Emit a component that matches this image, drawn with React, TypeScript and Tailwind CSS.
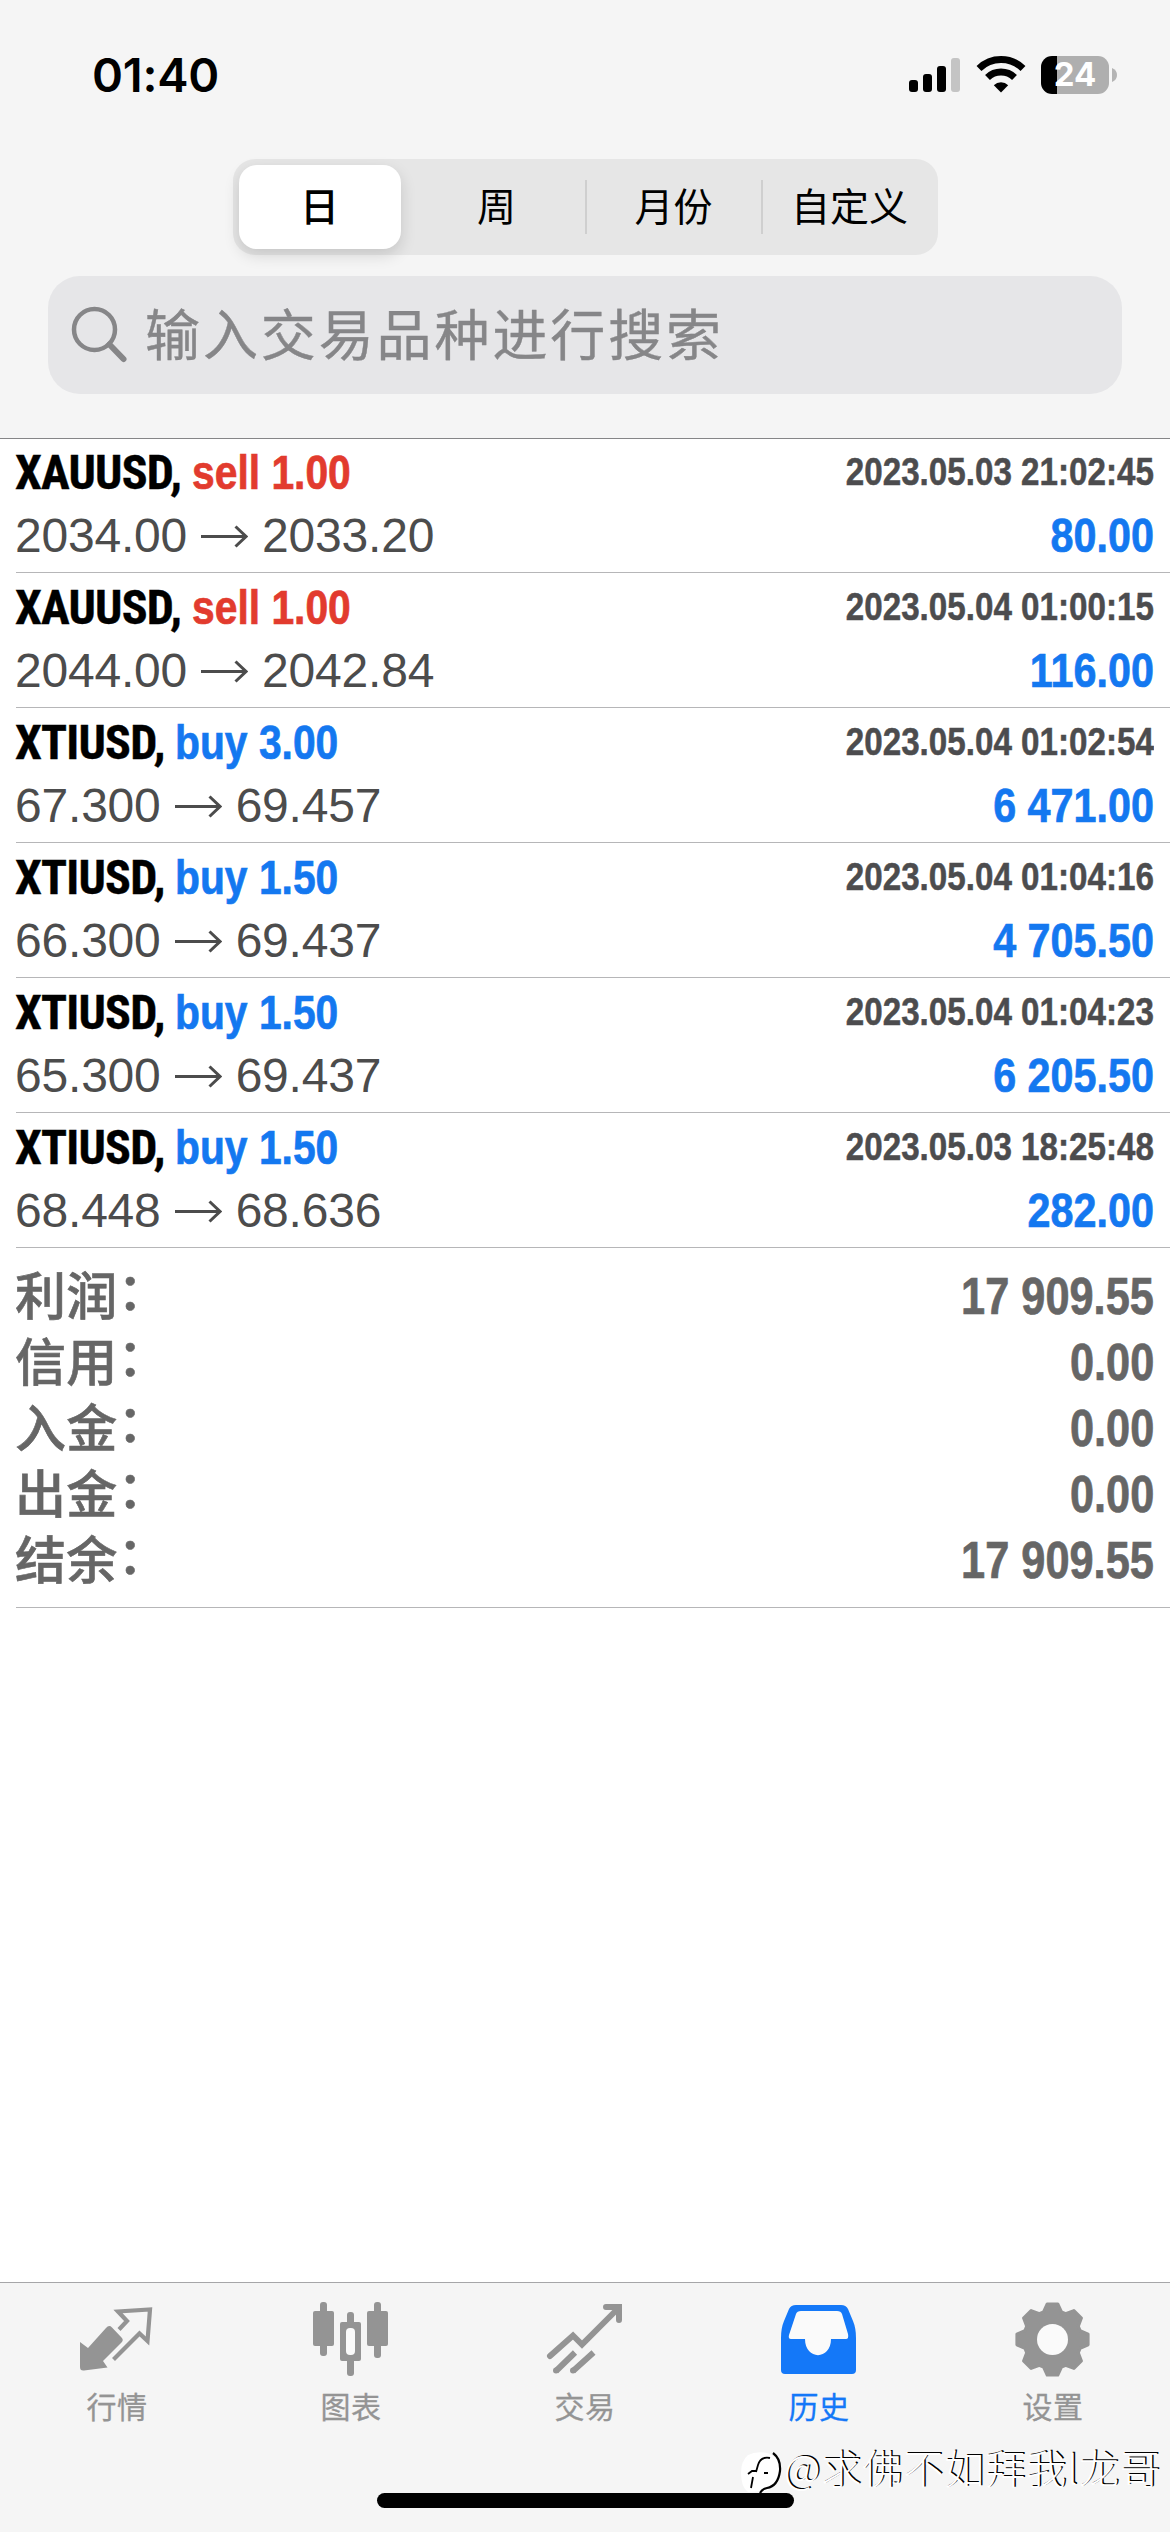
import type { ReactNode } from "react";
import clsx from "clsx";

type Deal = {
  symbol: string;
  side: "buy" | "sell";
  volume: string;
  open: string;
  close: string;
  time: string;
  profit: string;
};

const DEALS: Deal[] = [
  { symbol: "XAUUSD", side: "sell", volume: "1.00", open: "2034.00", close: "2033.20", time: "2023.05.03 21:02:45", profit: "80.00" },
  { symbol: "XAUUSD", side: "sell", volume: "1.00", open: "2044.00", close: "2042.84", time: "2023.05.04 01:00:15", profit: "116.00" },
  { symbol: "XTIUSD", side: "buy", volume: "3.00", open: "67.300", close: "69.457", time: "2023.05.04 01:02:54", profit: "6 471.00" },
  { symbol: "XTIUSD", side: "buy", volume: "1.50", open: "66.300", close: "69.437", time: "2023.05.04 01:04:16", profit: "4 705.50" },
  { symbol: "XTIUSD", side: "buy", volume: "1.50", open: "65.300", close: "69.437", time: "2023.05.04 01:04:23", profit: "6 205.50" },
  { symbol: "XTIUSD", side: "buy", volume: "1.50", open: "68.448", close: "68.636", time: "2023.05.03 18:25:48", profit: "282.00" },
];

const SUMMARY = [
  { label: "利润", value: "17 909.55" },
  { label: "信用", value: "0.00" },
  { label: "入金", value: "0.00" },
  { label: "出金", value: "0.00" },
  { label: "结余", value: "17 909.55" },
];

const PERIODS = ["日", "周", "月份", "自定义"];

function gearPath(cx: number, cy: number): string {
  const points: string[] = [];
  for (let i = 0; i < 8; i++) {
    for (const [r, offset] of [[29, -18], [36, -8.5], [36, 8.5], [29, 18]]) {
      const a = ((i * 45 + offset) * Math.PI) / 180;
      points.push(`${(cx + r * Math.cos(a)).toFixed(2)} ${(cy + r * Math.sin(a)).toFixed(2)}`);
    }
  }
  return `M${points.join("L")}Z`;
}

function StatusBar() {
  return (
    <div className="flex h-[149px] items-center justify-between pl-[92px] pr-[53px]">
      <span className="font-['Inter',sans-serif] text-[47px] font-semibold leading-none tracking-[-0.2px]">01:40</span>
      <div className="flex items-center">
        <svg className="h-[40px] w-[54px]" viewBox="0 0 54 40">
          <rect x="1" y="25" width="9" height="12" rx="3" />
          <rect x="15" y="19" width="9" height="18" rx="3" />
          <rect x="29" y="11" width="9" height="26" rx="3" />
          <rect x="43" y="3" width="9" height="34" rx="3" fill="#c4c4c4" />
        </svg>
        <svg className="ml-[14px] h-[40px] w-[50px]" viewBox="0 0 50 40" fill="none" stroke="#000" strokeWidth="7">
          <path d="M3 13.5a31.5 31.5 0 0 1 44 0" />
          <path d="M11.5 22.5a19.5 19.5 0 0 1 27 0" />
          <path d="M17.8 30.2a10.5 10.5 0 0 1 14.4 0L25 37.5Z" fill="#000" stroke="none" />
        </svg>
        <div className="ml-[15px] flex h-[38px] w-[68px] items-center justify-center rounded-[11px] bg-[linear-gradient(90deg,#000_16px,#afafaf_16px)] font-['Inter',sans-serif] text-[33px] font-bold leading-none text-white">
          24
        </div>
        <svg className="ml-[3px] h-[14px] w-[5px]" viewBox="0 0 5 14" fill="#b4b4b4">
          <path d="M0 0Q5 2 5 7T0 14Z" />
        </svg>
      </div>
    </div>
  );
}

function PeriodPicker() {
  return (
    <div className="mx-auto mt-[10px] flex h-[96px] w-[705px] items-center rounded-[22px] bg-[#e6e6e6] text-[39px]">
      {PERIODS.map((period, i) => (
        <div
          key={period}
          className={clsx(
            "flex items-center justify-center pb-[5px]",
            i === 0
              ? "ml-[6px] mr-[8px] h-[84px] w-[162px] rounded-[18px] bg-white font-medium shadow-[0_6px_16px_rgba(0,0,0,0.14)]"
              : "h-[54px] w-[176px]",
            i > 1 && "border-l-2 border-[#cfcfcf]",
          )}
        >
          {period}
        </div>
      ))}
    </div>
  );
}

function SearchField() {
  return (
    <div className="mx-[48px] mt-[21px] flex h-[118px] items-center rounded-[32px] bg-[#e6e6e8] pl-[23px] text-[#868688]">
      <svg className="h-[58px] w-[58px]" viewBox="0 0 58 58" fill="none" stroke="currentColor" strokeWidth="4.5" strokeLinecap="round">
        <circle cx="23.5" cy="23.5" r="20.5" />
        <path d="M38.5 38.5 52.5 53" strokeWidth="6" />
      </svg>
      <span className="ml-[16px] pb-[8px] text-[55px] leading-none tracking-[2.9px] [-webkit-text-stroke:0.4px]">输入交易品种进行搜索</span>
    </div>
  );
}

function DealRow({ deal }: { deal: Deal }) {
  return (
    <div className="ml-4 flex h-[135px] justify-between border-b border-[#b6b6b8] pr-4 pt-1 font-['Liberation_Sans',sans-serif] text-[48px] leading-[62px]">
      <div>
        <div className="-ml-px flex h-[62px] whitespace-nowrap font-bold">
          <span
            className={clsx(
              "font-['Roboto_Condensed','Roboto',sans-serif] tracking-[-0.8px] [-webkit-text-stroke:0.4px]",
              deal.side === "sell" ? "w-[177px]" : "w-[160px]",
            )}
          >
            {deal.symbol},
          </span>
          <span
            className={clsx(
              "origin-left scale-x-[0.85] [-webkit-text-stroke:0.7px]",
              deal.side === "sell" ? "text-[#e23b2e]" : "text-[#1478f0]",
            )}
          >
            {deal.side} {deal.volume}
          </span>
        </div>
        <div className="-ml-px flex h-[63px] items-center text-[#4c4c4c]">
          <span className="tracking-[-0.2px]">{deal.open}</span>
          <svg className="mx-[14px] h-[24px] w-[47px]" viewBox="0 0 47 24" fill="none" stroke="currentColor" strokeWidth="3">
            <path d="M0 12.500H45M34.500 2.500 45 12.500 34.500 22.500" />
          </svg>
          <span className="tracking-[-0.2px]">{deal.close}</span>
        </div>
      </div>
      <div className="text-right font-bold">
        <div className="h-[62px] origin-right scale-x-[0.873] text-[38px] leading-[60px] text-[#4c4c4e] [-webkit-text-stroke:0.5px]">{deal.time}</div>
        <div className="h-[63px] origin-right scale-x-[0.86] leading-[63px] text-[#1478f0] [-webkit-text-stroke:0.7px]">{deal.profit}</div>
      </div>
    </div>
  );
}

function Summary() {
  return (
    <div className="ml-4 h-[360px] border-b border-[#b6b6b8] pr-4 pt-[15px] text-[#666]">
      {SUMMARY.map((row) => (
        <div key={row.label} className="flex h-[66px] items-center justify-between font-bold">
          <span className="-ml-px -mt-[6px] text-[51px] font-medium leading-[66px] tracking-[0.3px] [-webkit-text-stroke:0.6px]">
            {row.label}
            <span className="relative -top-[5px]">：</span>
          </span>
          <span className="origin-right scale-x-[0.85] pt-px font-['Liberation_Sans',sans-serif] text-[51px] leading-[66px] [-webkit-text-stroke:0.7px]">
            {row.value}
          </span>
        </div>
      ))}
    </div>
  );
}

function Tab({ label, viewBox, active, children }: { label: string; viewBox: string; active?: boolean; children: ReactNode }) {
  return (
    <div className={clsx("flex flex-1 flex-col items-center", active ? "text-[#1478f8]" : "text-[#949494]")}>
      <svg className="h-[80px] w-[78px]" viewBox={viewBox} fill="currentColor">
        {children}
      </svg>
      <span className="mt-[5px] text-[30px] leading-[40px] tracking-[0.5px] [-webkit-text-stroke:0.3px]">{label}</span>
    </div>
  );
}

function TabBar() {
  return (
    <nav className="relative mt-auto h-[250px] border-t border-[#a6a6a8] bg-[#f5f5f5] pt-[17px]">
      <div className="flex">
        <Tab label="行情" viewBox="78 30 78 80">
          <path d="M80 72 88 78 106 58Q109 54.500 112 57.500L121.500 67.500Q124 70 121.500 72.500L103 91 107.500 97.500 84 100.500Q80 101 80 97Z" />
          <path d="M119 59.500 127 51 118 41.500 150 39.500 147.500 71 139.500 63.500 113.500 89.500" fill="none" stroke="currentColor" strokeWidth="4.200" />
        </Tab>
        <Tab label="图表" viewBox="312 30 78 80">
          <rect x="320" y="32" width="7" height="54" rx="3" />
          <rect x="313" y="41" width="21" height="35" rx="2" />
          <rect x="374" y="32" width="7" height="56" rx="3" />
          <rect x="367" y="41" width="21" height="35" rx="2" />
          <rect x="347" y="42" width="7" height="64" rx="3" />
          <rect x="340" y="52" width="21" height="39" rx="2" />
          <rect x="346" y="58" width="9" height="27" rx="4" fill="#fafafa" />
        </Tab>
        <Tab label="交易" viewBox="96 30 78 80">
          <g fill="none" stroke="currentColor" strokeWidth="6">
            <path d="M100 86 123 65.500 132 74.500 167 39.500" strokeLinecap="round" />
            <path d="M156 37H169V50" strokeLinecap="round" />
            <path d="M106 101 125 82.500M123 101 143.500 82.500" />
          </g>
          <path d="M160 36H170V46Z" />
          <circle cx="106" cy="100.500" r="3" />
          <circle cx="123" cy="100.500" r="3" />
        </Tab>
        <Tab label="历史" viewBox="60 30 78 80" active>
          <path d="M76 35H121Q126 35 128 39L133 51Q136 58 136 68V100Q136 104 132 104H65Q61 104 61 100V68Q61 58 64 51L69 39Q71 35 76 35Z" />
          <path d="M81 41H117Q121 41 122 44L128 64Q129 69 126 69H111C111 90.500 85 90.500 85 69H71Q68 69 69 65L76 44Q77 41 81 41Z" fill="#fafafa" />
        </Tab>
        <Tab label="设置" viewBox="294 30 78 80">
          <path d={gearPath(332.5, 69.5)} stroke="currentColor" strokeWidth="3" strokeLinejoin="round" />
          <circle cx="332.500" cy="69.500" r="15.500" fill="#fafafa" />
        </Tab>
      </div>
      <div className="mx-auto mt-[68px] h-[15px] w-[417px] rounded-full bg-black" />
      <div className="absolute right-[9px] top-[156px] flex items-center text-[40px] font-light leading-[50px] tracking-[1px] text-white [text-shadow:1.5px_-1px_0_#000]">
        <svg className="mt-[10px] h-[46px] w-[46px]" viewBox="0 0 46 46" fill="none" stroke="#000">
          <path d="M10 6Q20 1 32 5 43 10 43 23 42 37 28 42L10 43Q3 38 3 24 3 12 10 6Z" fill="#fff" stroke="none" />
          <path d="M35 4Q43 10 42 22 40 37 29 39 24 40 22 44" strokeWidth="2.200" />
          <path d="M32 9Q23 7 20 16L18 23M10 25 14 22H18M26 24H30M15 28 13 39" strokeWidth="1.800" />
        </svg>
        <span>@求佛不如拜我l龙哥</span>
      </div>
    </nav>
  );
}

export default function App() {
  return (
    <div className="flex h-[2532px] w-[1170px] flex-col overflow-hidden bg-white font-['Noto_Sans_CJK_SC',sans-serif] text-black">
      <header className="h-[439px] border-b border-[#858587] bg-[#f5f5f5]">
        <StatusBar />
        <PeriodPicker />
        <SearchField />
      </header>
      <main className="-mt-px">
        {DEALS.map((deal) => (
          <DealRow key={deal.time} deal={deal} />
        ))}
        <Summary />
      </main>
      <TabBar />
    </div>
  );
}
